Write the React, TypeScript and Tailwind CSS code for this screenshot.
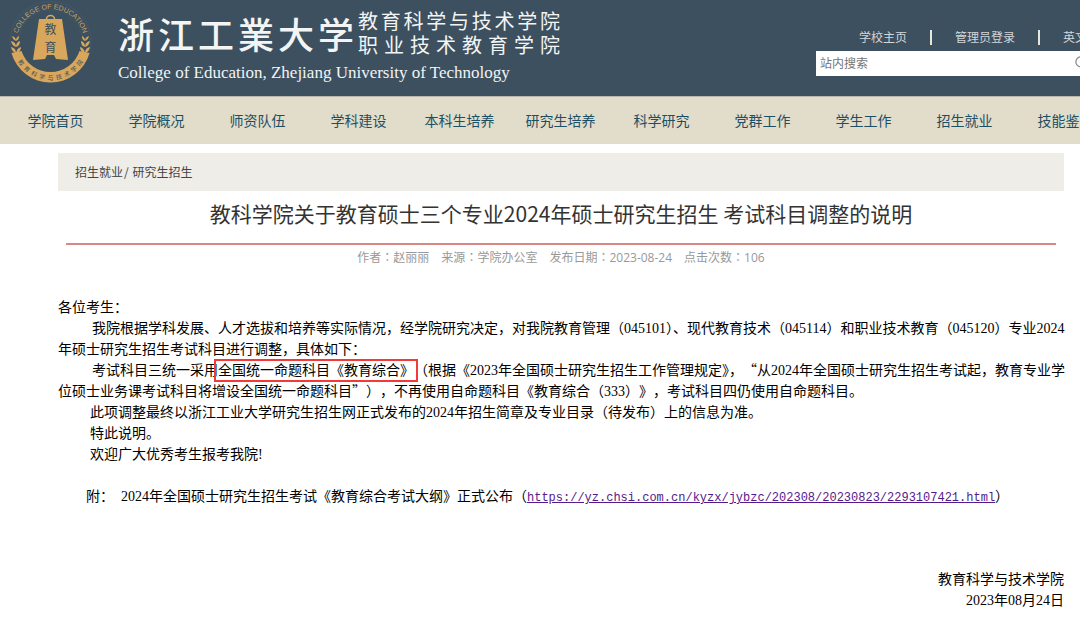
import type { ReactNode } from 'react';
import { Search } from 'lucide-react';

const navItems = ['学院首页', '学院概况', '师资队伍', '学科建设', '本科生培养', '研究生培养', '科学研究', '党群工作', '学生工作', '招生就业', '技能鉴定'];
const meta = [
    ['作者', '赵丽丽'],
    ['来源', '学院办公室'],
    ['发布日期', '2023-08-24'],
    ['点击次数', '106'],
];

function Emblem() {
    return (
        <svg viewBox="0 0 84 84" className="w-[84px] h-[84px] shrink-0" role="img" aria-label="College of Education">
            <defs>
                <path id="ring-top" d="M 8.5 43 A 34 34 0 0 1 76.5 43"/>
                <path id="ring-bottom" d="M 4.5 42 A 38 38 0 0 0 80.5 42"/>
            </defs>
            <circle cx="42.5" cy="42" r="40.5" fill="none" stroke="#4a5d6a" strokeWidth="0.6"/>
            <circle cx="42.5" cy="42" r="32" fill="none" stroke="#4a5d6a" strokeWidth="0.4"/>
            <text fill="#c9a463" fontSize="7" fontFamily="Liberation Sans, sans-serif">
                <textPath href="#ring-top" startOffset="50%" textAnchor="middle">COLLEGE OF EDUCATION</textPath>
            </text>

            {/* Laurel leaves */}
            <g fill="#d9a75c">
                <path d="M4 36 q1 4 4 5 q0 -4 -4 -5z M11 36 q-3 1 -3 5 q3 -1 3 -5z"/>
                <path d="M3 41 q1 5 5 6 q0 -5 -5 -6z M12 41 q-4 1 -4 6 q4 -1 4 -6z"/>
                <path d="M3 47 q1 5 5 6 q0 -5 -5 -6z M13 47 q-4 1 -5 6 q5 -1 5 -6z"/>
                <path d="M81 36 q-1 4 -4 5 q0 -4 4 -5z M74 36 q3 1 3 5 q-3 -1 -3 -5z"/>
                <path d="M82 41 q-1 5 -5 6 q0 -5 5 -6z M73 41 q4 1 4 6 q-4 -1 -4 -6z"/>
                <path d="M82 47 q-1 5 -5 6 q0 -5 5 -6z M72 47 q4 1 5 6 q-5 -1 -5 -6z"/>
            </g>

            {/* Ribbon */}
            <path d="M3.5 53 L13.5 51 A 30.5 30.5 0 0 0 71.5 51 L81.5 53 A 40.5 40.5 0 0 1 3.5 53z" fill="#d9a75c"/>
            <text fill="#3c4f5e" fontSize="6" fontFamily="Noto Sans CJK SC, sans-serif">
                <textPath href="#ring-bottom" startOffset="50%" textAnchor="middle">{[...'教育科学与技术学院'].join('\u2002')}</textPath>
            </text>

            {/* Bell */}
            <path d="M38.5 19 a4 3.5 0 0 1 8 0" fill="none" stroke="#d9a75c" strokeWidth="1.6"/>
            <path d="M31 19 H54 L60 60 L48 59 L46 55 H39 L37 59 L25 60z" fill="#d9a75c"/>
            <g fill="#3c4f5e" fontSize="12" fontFamily="Noto Sans CJK SC, sans-serif" textAnchor="middle">
                <text x="42.5" y="34">教</text>
                <text x="42.5" y="52">育</text>
            </g>
        </svg>
    );
}

function Line({ indent = '', children }: { indent?: string; children?: ReactNode }) {
    return <span className={`block min-h-[21px] whitespace-nowrap ${indent}`}>{children}</span>;
}

// Quotes take the full width of a Chinese character
function Quote({ children }: { children: ReactNode }) {
    return <span className="leading-none font-['Noto_Sans_CJK_SC',sans-serif]">{children}</span>;
}

export default function App() {
    return (
        <div lang="zh-CN" className="w-full overflow-hidden bg-white pb-4 font-['Noto_Sans_CJK_SC',sans-serif] [text-spacing-trim:space-all]">
            {/* Header */}
            <header className="min-w-[1120px] h-24 flex justify-between bg-[#3c5060]">
                <div className="flex items-start pl-2">
                    <Emblem/>
                    <div className="flex flex-col pl-[26px] pt-[9px] text-[#f3f4f4]">
                        <div className="flex items-center gap-1">
                            <h1 className="flex gap-1 text-[36px] leading-[48px] font-medium">
                                {[...'浙江工業大学'].map((char, i) => <span key={i}>{char}</span>)}
                            </h1>
                            <div className="w-[202px] text-[20px] leading-6">
                                <p className="[text-align-last:justify]">教育科学与技术学院</p>
                                <p className="[text-align-last:justify]">职业技术教育学院</p>
                            </div>
                        </div>
                        <p className="pt-1 text-[17px] leading-6 whitespace-nowrap font-['Liberation_Serif',serif]">College of Education, Zhejiang University of Technology</p>
                    </div>
                </div>

                <div className="w-[304px] shrink-0 pt-[29px]">
                    <div className="flex items-center gap-[23px] pl-[43px] text-xs leading-4 text-[#d3d7da] whitespace-nowrap">
                        <a href="#home">学校主页</a>
                        <span className="w-0.5 h-[15px] bg-[#e6e6dc]"/>
                        <a href="#login">管理员登录</a>
                        <span className="w-0.5 h-[15px] bg-[#e6e6dc]"/>
                        <a href="#english">英文版</a>
                    </div>
                    <form className="mt-1.5 h-[25px] flex items-center bg-white">
                        <input type="text" aria-label="站内搜索" placeholder="站内搜索" className="w-[258px] h-full px-1 pb-0.5 text-xs outline-none placeholder:text-[#757575]"/>
                        <button type="button" aria-label="搜索" className="pb-0.5 text-[#888]">
                            <Search size={15}/>
                        </button>
                    </form>
                </div>
            </header>

            {/* Navigation */}
            <nav className="min-w-[1120px] h-12 flex items-center border-t border-[#b9b6ab] bg-[#e2dcca] pl-[5px] pb-0.5 text-sm text-[#1d4f63]">
                {navItems.map((item) => (
                    <a key={item} href="#nav" className="w-[101px] shrink-0 text-center whitespace-nowrap">{item}</a>
                ))}
            </nav>

            {/* Article */}
            <main className="pt-[9px] pl-[58px] pr-4">
                <div className="h-[38px] flex items-center gap-px bg-[#eeede8] pl-[17px] text-xs text-[#444]">
                    <a href="#admission">招生就业</a>
                    <span>/&nbsp;</span>
                    <a href="#graduate">研究生招生</a>
                </div>
                <h2 className="mx-2 pt-1.5 pb-3.5 border-b-2 border-[#d98884] text-center text-[21px] leading-8 text-[#333] whitespace-nowrap">
                    教科学院关于教育硕士三个专业2024年硕士研究生招生 考试科目调整的说明
                </h2>
                <div className="flex justify-center gap-3 pt-1 text-xs leading-[18px] text-[#999] whitespace-nowrap font-['Open_Sans','Noto_Sans_CJK_SC',sans-serif]">
                    {meta.map(([label, value]) => (
                        <span key={label}>
                            {label}<span lang="zh-TW" className="leading-none font-['Noto_Sans_CJK_TC',sans-serif]">：</span>{value}
                        </span>
                    ))}
                </div>

                <article className="mt-[30px] text-sm leading-[21px] text-black font-['Liberation_Serif','Noto_Sans_CJK_SC',serif]">
                    <Line>各位考生：</Line>
                    <p>
                        <Line indent="pl-[34px] [text-spacing-trim:normal]">我院根据学科发展、人才选拔和培养等实际情况，经学院研究决定，对我院教育管理（045101）、现代教育技术（045114）和职业技术教育（045120）专业2024</Line>
                        <Line>年硕士研究生招生考试科目进行调整，具体如下：</Line>
                    </p>
                    <p>
                        <Line indent="pl-[34px]">
                            考试科目三统一采用<span className="outline-2 outline-offset-2 outline-[#f23b38]">全国统一命题科目《教育综合》</span>（根据《2023年全国硕士研究生招生工作管理<span className="[text-spacing-trim:normal]">规定》，</span><Quote>“</Quote>从2024年全国硕士研究生招生考试起，教育专业学
                        </Line>
                        <Line>位硕士业务课考试科目将增设全国统一命题科目<Quote>”</Quote>），不再使用自命题科目《教育综合（333）》，考试科目四仍使用自命题科目。</Line>
                    </p>
                    <Line indent="pl-8">此项调整最终以浙江工业大学研究生招生网正式发布的2024年招生简章及专业目录（待发布）上的信息为准。</Line>
                    <Line indent="pl-8">特此说明。</Line>
                    <Line indent="pl-8">欢迎广大优秀考生报考我院!</Line>
                    <Line/>
                    <Line indent="pl-7">
                        附：&nbsp;&nbsp;2024年全国硕士研究生招生考试《教育综合考试大纲》正式公布（<a href="#notice" className="text-xs leading-none text-[#551a8b] underline font-['Liberation_Mono',monospace]">https://yz.chsi.com.cn/kyzx/jybzc/202308/20230823/2293107421.html</a>）
                    </Line>
                    <div className="mt-[62px] text-right">
                        <p>教育科学与技术学院</p>
                        <p>2023年08月24日</p>
                    </div>
                </article>
            </main>
        </div>
    );
}
